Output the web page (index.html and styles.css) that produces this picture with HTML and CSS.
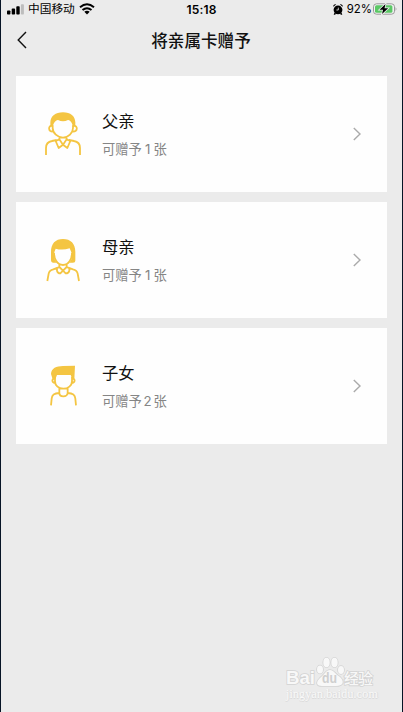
FILE: index.html
```html
<!DOCTYPE html>
<html lang="zh-CN">
<head>
<meta charset="utf-8">
<title>将亲属卡赠予</title>
<link rel="stylesheet" href="styles.css">
</head>
<body>
<div class="screen">
  <header class="status">
    <div class="status-left">
      <svg class="signal" width="18" height="12" viewBox="0 0 18 12"><rect x="0" y="7.5" width="3.4" height="4" rx=".8"/><rect x="4.7" y="5.6" width="3.4" height="5.9" rx=".8"/><rect x="9.3" y="3.3" width="3.4" height="8.2" rx=".8"/><rect class="dim" x="13.9" y="1.3" width="3" height="10.2" rx=".8"/></svg>
      <span class="carrier">中国移动</span>
      <svg class="wifi" width="16" height="12" viewBox="0 0 16 12"><path d="M1 4.2Q8-1.6 15 4.2M3.5 7Q8 3.4 12.5 7" fill="none" stroke="#000" stroke-width="2"/><path d="M5.3 8.8Q8 6.6 10.7 8.8L8 11.5Z"/></svg>
    </div>
    <time class="clock">15:18</time>
    <div class="status-right">
      <svg class="alarm" width="10" height="11" viewBox="0 0 10 11"><circle cx="5" cy="5.8" r="4.4"/><path d="M.3 2.8A2 2 0 0 1 3.2.5ZM9.7 2.8A2 2 0 0 0 6.8.5ZM1.5 8.5L.7 10.7H2.2L3 9.5ZM8.5 8.5L9.3 10.7H7.8L7 9.5Z"/><path d="M5.3 3.6V6H3.4" fill="none" stroke="#ebebeb" stroke-width=".8"/></svg>
      <span class="percent">92%</span>
      <svg class="battery" width="25" height="12" viewBox="0 0 25 12"><rect x=".5" y=".8" width="21" height="10.4" rx="3" fill="#f2f2f2" stroke="#999"/><rect x="2" y="2.2" width="17.4" height="7.6" rx="1.5" fill="#5bc866"/><path d="M22.6 4Q24.4 6 22.6 8Z" fill="#999"/><path d="M12.5 1L6.5 6.7H10L9 11L15.2 5.2H11.5Z" stroke="#f2f2f2" stroke-width="1.5" paint-order="stroke"/></svg>
    </div>
  </header>
  <nav class="titlebar">
    <svg class="back" width="10" height="18" viewBox="0 0 10 18"><path d="M9 1L1.2 9L9 17" fill="none" stroke="#111" stroke-width="1.4"/></svg>
    <h1>将亲属卡赠予</h1>
  </nav>
  <main class="cards">
    <section class="card">
      <svg class="person" viewBox="0 0 180 195"><path class="fill" d="M46 79V67C47 48 61 37 84 37S120 48 121 67V79L113 82C113 72 109 62 99 60Q84 68 69 60C59 62 54 72 54 82Z"/><path d="M53 76V84C53 99 68 113 84 113S114 99 114 84V76M49 78C40 77 39 95 53 95M118 78C128 77 129 95 114 95M33 165V144C33 130 39 125 51 123L65 120M135 165V144C135 130 129 125 117 123L102 120M73 110V118L62 123L71 144L84 134L73 118M95 110V118L106 123L97 144L84 134L95 118"/></svg>
      <div class="info"><h2>父亲</h2><p>可赠予<span class="num">1</span>张</p></div>
      <svg class="arrow" width="8" height="14" viewBox="0 0 8 14"><path d="M.8 1L7 7L.8 13"/></svg>
    </section>
    <section class="card">
      <svg class="person" viewBox="0 0 180 195"><path class="fill" d="M48 78C48 53 61 39 84 39S121 53 121 78V104Q121 110 114 110H103C109 104 112 96 110 81L104 67Q82 74 62 68L57 81C56 95 60 104 66 110H54Q48 110 48 103Z"/><path d="M57 80C57 98 66 117 84 117S111 98 111 80M73 113V123L65 127M95 113V123L104 127M37 165L41 143Q43 133 55 130L68 125M132 165L128 143Q126 133 114 130L100 125M66 126V134Q68 142 76 142L84 134L92 142Q101 142 103 134V126M73 123L84 134L95 123"/></svg>
      <div class="info"><h2>母亲</h2><p>可赠予<span class="num">1</span>张</p></div>
      <svg class="arrow" width="8" height="14" viewBox="0 0 8 14"><path d="M.8 1L7 7L.8 13"/></svg>
    </section>
    <section class="card">
      <svg class="person" viewBox="0 0 180 195"><path class="fill" d="M53 82L48 66C49 48 64 43 84 42L120 41L118 82H112L107 69H66L61 82Z"/><path d="M60 75V88C60 101 71 110 85 110S111 101 111 88V75M57 80C50 81 50 93 61 93M114 80C121 81 121 93 110 93M73 108V123Q73 133 85 133T98 123V108M48 160L50 140C51 128 57 124 73 123M123 160L121 140C120 128 114 124 98 123"/></svg>
      <div class="info"><h2>子女</h2><p>可赠予<span class="num">2</span>张</p></div>
      <svg class="arrow" width="8" height="14" viewBox="0 0 8 14"><path d="M.8 1L7 7L.8 13"/></svg>
    </section>
  </main>
  <footer class="watermark">
    <svg class="logo" width="92" height="32" viewBox="0 0 92 32">
      <g class="mark"><ellipse cx="35" cy="14.500" rx="3" ry="4"/><ellipse cx="41.500" cy="7.500" rx="3.200" ry="4.700"/><ellipse cx="49.500" cy="7.500" rx="3.200" ry="4.700"/><ellipse cx="56" cy="15" rx="3" ry="4"/><path d="M45 15C41 15 39 20 35 23C30 28 32 31 37 31H51C58 31 60 27 55 22C50 19 49 15 45 15Z"/></g>
      <text class="brand" x="1" y="29" textLength="29" lengthAdjust="spacingAndGlyphs">Bai</text>
      <text class="du" x="37" y="28" textLength="15" lengthAdjust="spacingAndGlyphs">du</text>
      <text class="cn" x="59" y="29" textLength="29">经验</text>
    </svg>
    <div class="url">jingyan.baidu.com</div>
  </footer>
</div>
</body>
</html>
```
FILE: styles.css
```css
* { box-sizing: border-box; }
body { margin: 0; background: #ebebeb; font-family: Inter, "Noto Sans CJK SC", sans-serif; color: #111; }
.screen { height: 712px; display: flex; flex-direction: column; border-left: 1px solid #071426; border-right: 1px solid #071426; overflow: hidden; }
svg { display: block; flex: none; }
.status { height: 18px; display: grid; grid-template-columns: 1fr auto 1fr; align-items: center; padding: 0 4px 0 6px; font-size: 12px; line-height: 18px; color: #000; }
.status-left, .status-right { display: flex; align-items: center; }
.status-right { justify-content: flex-end; }
.carrier { margin: 0 4px 0 3px; padding-top: 1px; font-size: 11.7px; line-height: 17px; }
.dim { fill: #bdbdbd; }
.clock { padding-top: 1px; line-height: 17px; margin-left: -2px; font-weight: 600; letter-spacing: .2px; }
.percent { margin: 0 1px 0 4px; padding-top: 1px; line-height: 17px; font-size: 11.400px; }
.titlebar { height: 44px; display: grid; grid-template-columns: 32px 1fr 32px; align-items: center; padding-left: 16px; padding-right: 17px; }
h1 { margin: 1px 0 0; font-size: 16.600px; line-height: 24px; font-weight: 500; text-align: center; }
.cards { display: flex; flex-direction: column; gap: 10px; padding: 14px 15.500px 0 15px; }
.card { height: 116px; background: #fefefe; display: flex; align-items: center; padding: 0 25.500px 0 19px; }
.person { width: 60px; height: 65px; margin-top: -3px; }
.person path { fill: none; stroke: #f4c542; stroke-width: 5.400; stroke-linejoin: round; }
.person .fill { fill: #f4c542; stroke: none; }
.info { flex: 1; padding: 1px 0 0 7px; }
h2 { margin: 0; font-size: 16.300px; line-height: 28px; font-weight: 400; }
p { margin: 0; font-size: 13.300px; line-height: 28px; color: #858585; }
.num { display: inline-block; width: 11.500px; text-align: center; }
.arrow path { fill: none; stroke: #aaa; stroke-width: 1.400; }
.watermark { margin: auto 0 11px 284px; }
.logo { overflow: visible; }
.mark, .brand, .cn { fill: #f8f8f8; stroke: #d3d3d3; stroke-width: 1.600; paint-order: stroke; }
.brand { font: 700 19px "Liberation Sans", sans-serif; }
.du { font: 700 14px "Liberation Sans", sans-serif; fill: #cfcfcf; }
.cn { font: 500 15px "Noto Sans CJK SC", sans-serif; }
.url { padding-left: 1px; font: 12px/14px "Liberation Serif", serif; letter-spacing: .15px; color: #f9f9f9; text-shadow: 0 1px 0 #dadada, 1px 0 0 #dedede; white-space: nowrap; }
```
